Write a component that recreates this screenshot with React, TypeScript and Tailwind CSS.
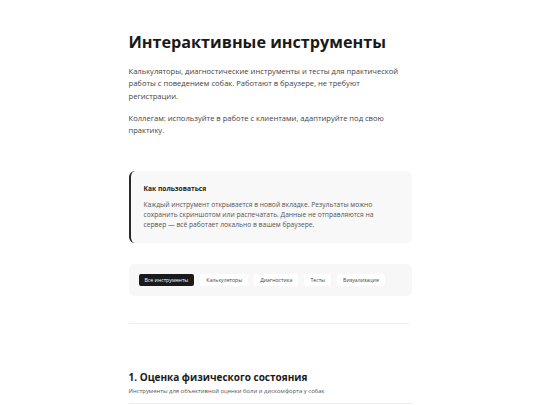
export default function App() {
  const filters = ['Все инструменты', 'Калькуляторы', 'Диагностика', 'Тесты', 'Визуализация'];

  return (
    <div className="min-h-screen bg-white text-[#1a1a1a]" style={{ fontFamily: '"Open Sans", "Noto Sans", sans-serif' }}>
      <div className="mx-auto w-[283px] pt-[32px]">
        {/* Header */}
        <h1 className="text-[16.2px] font-bold leading-[20px] text-[#1a1a1a]">
          Интерактивные инструменты
        </h1>
        <p className="mt-[13px] pr-[5px] text-[7.6px] leading-[12.3px] text-[#444]">
          Калькуляторы, диагностические инструменты и тесты для практической работы с поведением собак. Работают в браузере, не требуют регистрации.
        </p>
        <p className="mt-[10px] pr-[5px] text-[7.6px] leading-[12.3px] text-[#444]">
          Коллегам: используйте в работе с клиентами, адаптируйте под свою практику.
        </p>

        {/* How to use */}
        <div className="mt-[35px] rounded-[6px] border-l-2 border-[#2a2a2a] bg-[#f8f8f8] pb-[13px] pl-[13px] pr-[14px] pt-[13px]">
          <div className="text-[6.7px] font-bold leading-[10px] text-[#1a1a1a]">Как пользоваться</div>
          <p className="mt-[6px] text-[6.7px] leading-[10px] text-[#555]">
            Каждый инструмент открывается в новой вкладке. Результаты можно сохранить скриншотом или распечатать. Данные не отправляются на сервер — всё работает локально в вашем браузере.
          </p>
        </div>

        {/* Filters */}
        <div className="mt-[21px] flex gap-[6px] rounded-[5px] bg-[#f7f7f7] px-[10px] py-[10px]">
          {filters.map((f, i) => (
            <button
              key={f}
              className={`h-[12px] shrink-0 whitespace-nowrap rounded-[2px] px-[6px] text-[5.2px] leading-[12px] ${
                i === 0 ? 'bg-[#1a1a1a] text-white' : 'bg-white text-[#444]'
              }`}
            >
              {f}
            </button>
          ))}
        </div>

        <div className="mt-[27px] h-px w-[280px] bg-[#eeeeee]" />

        {/* Section 1 */}
        <h2 className="mt-[47px] text-[10px] font-bold leading-[13px] text-[#1a1a1a]">
          1. Оценка физического состояния
        </h2>
        <p className="mt-[3px] text-[5.9px] leading-[8px] text-[#555]">
          Инструменты для объективной оценки боли и дискомфорта у собак
        </p>
        <div className="mt-[8px] h-px w-full bg-[#eeeeee]" />
      </div>
    </div>
  );
}
